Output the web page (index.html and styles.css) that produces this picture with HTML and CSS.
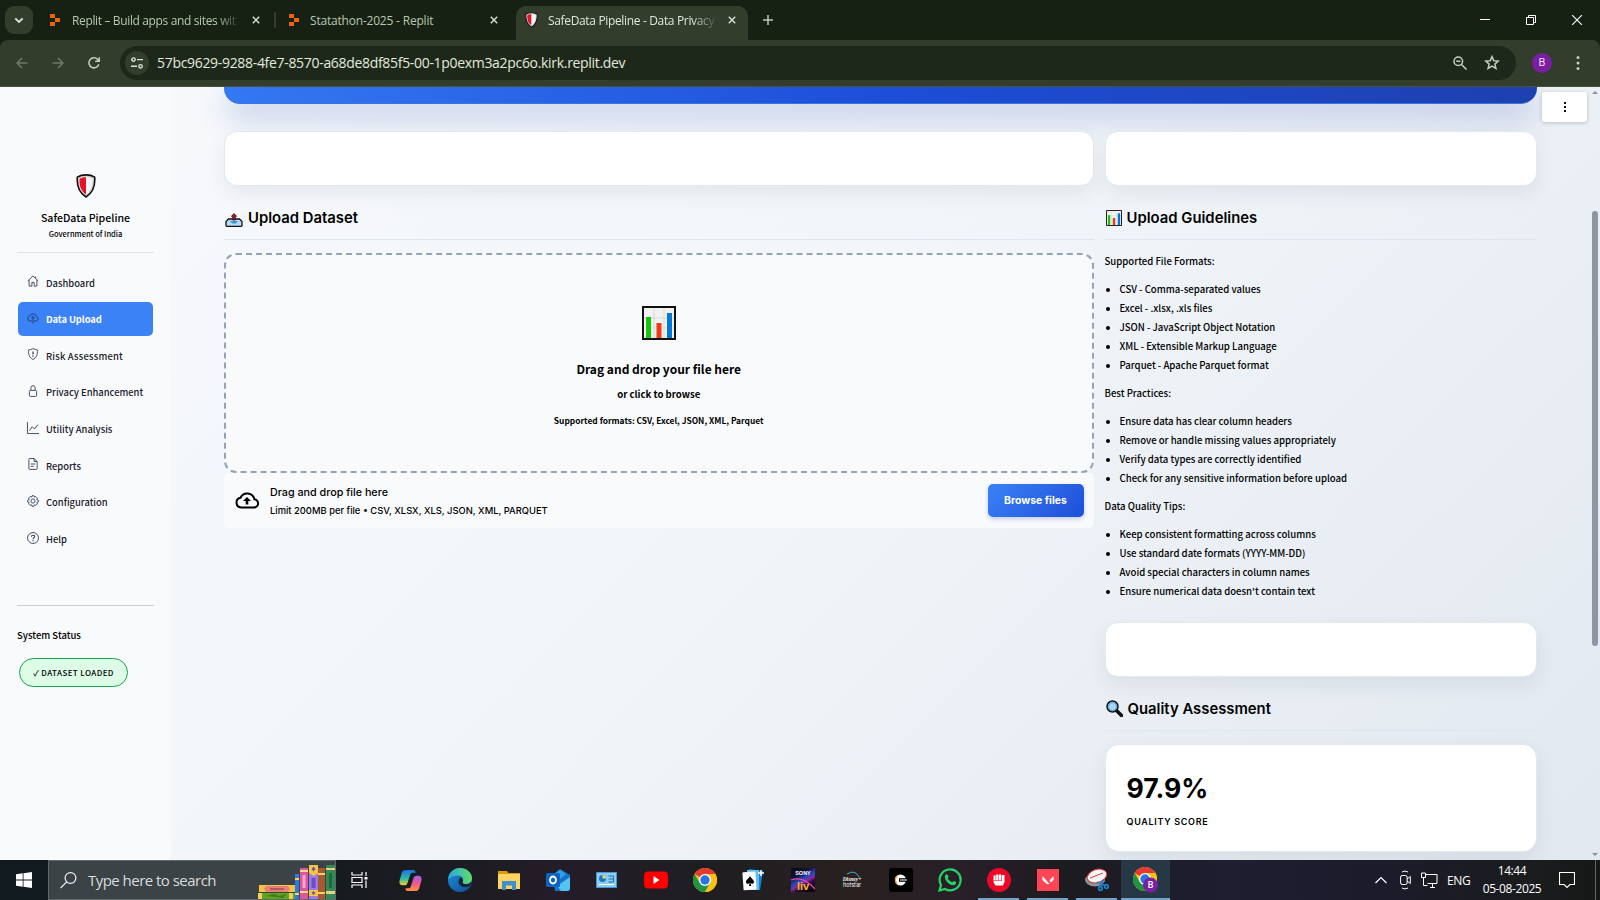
FILE: index.html
```html
<!DOCTYPE html>
<html lang="en">
<head>
<meta charset="utf-8">
<title>SafeData Pipeline - Data Privacy</title>
<link rel="stylesheet" href="styles.css">
</head>
<body>
<svg width="0" height="0" class="defs">
  <defs>
    <linearGradient id="edgeA" x1="0" y1="0" x2="1" y2="0"><stop offset="0" stop-color="#27a8e0"/><stop offset="1" stop-color="#62de63"/></linearGradient>
    <linearGradient id="edgeB" x1="0" y1="0" x2="1" y2="1"><stop offset="0" stop-color="#1b91dd"/><stop offset="1" stop-color="#114a95"/></linearGradient>
    <linearGradient id="copA" x1="0" y1="0" x2="0" y2="1"><stop offset="0" stop-color="#1676e6"/><stop offset=".55" stop-color="#2fb8a5"/><stop offset="1" stop-color="#f2d02c"/></linearGradient>
    <linearGradient id="copB" x1="0" y1="0" x2="0" y2="1"><stop offset="0" stop-color="#a95cf0"/><stop offset=".5" stop-color="#f0568f"/><stop offset="1" stop-color="#fb923c"/></linearGradient>
    <linearGradient id="sony" x1="0" y1="0" x2=".6" y2="1"><stop offset="0" stop-color="#0a0a18"/><stop offset=".35" stop-color="#101038"/><stop offset=".55" stop-color="#2747c0"/><stop offset=".68" stop-color="#8a2a9a"/><stop offset=".8" stop-color="#2a0f3e"/><stop offset="1" stop-color="#0c0616"/></linearGradient>
  </defs>
  <symbol id="replit" viewBox="0 0 10 12"><path fill="#f26207" d="M.6 0H4.400a.6.6 0 0 1 .6.6V4H.6A.6.6 0 0 1 0 3.400V.6A.6.6 0 0 1 .6 0ZM5 4h4.400a.6.6 0 0 1 .6.6v2.800a.6.6 0 0 1-.6.6H5ZM.6 8H5v3.400a.6.6 0 0 1-.6.6H.6a.6.6 0 0 1-.6-.6V8.600A.6.6 0 0 1 .6 8Z"/></symbol>
  <symbol id="shield" viewBox="0 0 20 24"><path d="M10 .9C7 .9 3.500 1.800 1.300 3.200c-.6 8 .8 15 8.700 19.800 7.900-4.800 9.300-11.800 8.700-19.800C16.500 1.800 13 .9 10 .9Z" fill="#d4d4d8" stroke="#111" stroke-width="1.600"/><path d="M10 3.300c-2.300 0-4.700.6-6.400 1.500C3.300 11 4.300 16.500 10 20.500Z" fill="#e81224"/><path d="M10 3.300c2.300 0 4.700.6 6.400 1.500.3 6.200-.7 11.700-6.400 15.700Z" fill="#f4f4f4"/></symbol>
  <symbol id="x" viewBox="0 0 8 8"><path d="M.8.8l6.400 6.400M7.200.8.800 7.200" stroke="currentColor" stroke-width="1.500" fill="none"/></symbol>
  <symbol id="chart" viewBox="0 0 34 34"><path fill="#f2f2f2" stroke="#111" stroke-width="2" d="M1 1h32v32H1z"/><path stroke="#d8d8d8" d="M12 2v30M22 2v30M2 12h30M2 22h30"/><path fill="#16c60c" d="M4 11h5v21H4z"/><path fill="#f03a17" d="M14.500 17h5v15h-5z"/><path fill="#0078d7" d="M25 7h5v25h-5z"/></symbol>
  <symbol id="chrome" viewBox="0 0 24 24"><circle cx="12" cy="12" r="12" fill="#fbc116"/><path d="M12 12 1.600 6A12 12 0 0 1 22.400 6H12Z" fill="#e33b2e"/><path d="M1.600 6A12 12 0 0 0 12 24l5.200-9L12 12 6.800 15Z" fill="#229342"/><path d="M12 6h10.400A12 12 0 0 1 12 24l5.200-9Z" fill="#fbc116"/><circle cx="12" cy="12" r="6" fill="#fff"/><circle cx="12" cy="12" r="4.700" fill="#2a74e8"/></symbol>
</svg>

<header class="browser">
  <div class="tabs">
    <div class="tab-search"><svg width="10" height="7" viewBox="0 0 10 7"><path d="M1.300 1.300 5 5l3.700-3.700" fill="none" stroke="#dfe6da" stroke-width="1.800"/></svg></div>
    <div class="tab t1"><svg width="10" height="12"><use href="#replit"/></svg><span class="tt fade">Replit – Build apps and sites wit</span><svg class="cl" width="8" height="8"><use href="#x"/></svg></div>
    <i class="sep"></i>
    <div class="tab t2"><svg width="10" height="12"><use href="#replit"/></svg><span class="tt">Statathon-2025 - Replit</span><svg class="cl" width="8" height="8"><use href="#x"/></svg></div>
    <div class="tab active"><svg width="13" height="16"><use href="#shield"/></svg><span class="tt fade">SafeData Pipeline - Data Privacy</span><svg class="cl" width="8" height="8"><use href="#x"/></svg></div>
    <svg class="plus" width="10" height="10" viewBox="0 0 10 10"><path d="M5 0v10M0 5h10" stroke="#bccab4" stroke-width="1.500"/></svg>
    <div class="win">
      <svg width="10" height="10" viewBox="0 0 10 10"><path d="M0 4.500h10" stroke="#fff"/></svg>
      <svg width="10" height="10" viewBox="0 0 10 10"><path d="M.5 2.500h7v7h-7zM2.500 2.500v-2h7v7h-2" stroke="#fff" fill="none"/></svg>
      <svg width="10" height="10" viewBox="0 0 10 10"><path d="M0 0l10 10M10 0 0 10" stroke="#fff" stroke-width="1.100"/></svg>
    </div>
  </div>
  <div class="toolbar">
    <svg class="nav" width="12" height="12" viewBox="0 0 12 12"><path d="M11.500 6H1M6 1 1 6l5 5" fill="none" stroke="#6c7966" stroke-width="1.500"/></svg>
    <svg class="nav" width="12" height="12" viewBox="0 0 12 12"><path d="M.5 6H11M6 1l5 5-5 5" fill="none" stroke="#6c7966" stroke-width="1.500"/></svg>
    <svg class="nav" width="12" height="12" viewBox="0 0 12 12"><path d="M10.800 7.200A5 5 0 1 1 9.700 2.500L11 4M11.200.2V4.200H7.200" fill="none" stroke="#c4d1bc" stroke-width="1.500"/></svg>
    <div class="omni">
      <span class="site"><svg width="12" height="12" viewBox="0 0 12 12"><g fill="none" stroke="#dbe3d5" stroke-width="1.400"><circle cx="2.500" cy="2.600" r="1.700"/><circle cx="9.500" cy="9.300" r="1.700"/><path d="M6 2.600h6M0 9.300h6"/></g></svg></span>
      <span class="url">57bc9629-9288-4fe7-8570-a68de8df85f5-00-1p0exm3a2pc6o.kirk.replit.dev</span>
      <svg class="mag" width="14" height="14" viewBox="0 0 14 14"><g fill="none" stroke="#c4ccbe" stroke-width="1.500"><circle cx="5.300" cy="5.300" r="4.300"/><path d="m8.500 8.500 5 5M3.200 5.300h4.200"/></g></svg>
      <svg width="16" height="15" viewBox="0 0 16 15"><path d="m8 1.600 1.800 4.100 4.500.4-3.400 3 1 4.400L8 11.200l-3.900 2.300 1-4.400-3.400-3 4.500-.4Z" fill="none" stroke="#c4ccbe" stroke-width="1.500"/></svg>
    </div>
    <span class="avatar">B</span>
    <svg class="dots" width="4" height="14" viewBox="0 0 4 14"><g fill="#c4d1bc"><circle cx="2" cy="1.600" r="1.500"/><circle cx="2" cy="7" r="1.500"/><circle cx="2" cy="12.400" r="1.500"/></g></svg>
  </div>
</header>

<div class="page">
  <aside>
    <svg class="logo" width="20" height="24"><use href="#shield"/></svg>
    <h3>SafeData Pipeline</h3>
    <p class="gov">Government of India</p>
    <nav>
      <a><svg viewBox="0 0 16 16"><path d="M1 8l7-6.800L15 8M2.800 6.500v8.300h3.700v-5h3v5h3.700V6.500M11.500 2v2.500"/></svg><span>Dashboard</span></a>
      <a class="on"><svg viewBox="0 0 16 16"><path d="M6.500 12H4A3.200 3.200 0 0 1 3.500 5.700 4.600 4.600 0 0 1 12.400 5.800 3.200 3.200 0 0 1 12.400 12H9.500M8 15.500V6M5.700 8.300 8 6l2.300 2.300"/></svg><span>Data Upload</span></a>
      <a><svg viewBox="0 0 16 16"><path d="M8 .8C6 1.700 4 2.300 2.200 2.600 1.500 8 3.300 13 8 15.300 12.700 13 14.500 8 13.800 2.600 12 2.300 10 1.700 8 .8Z"/><path d="M8 4.500v4M8 10v1.500" stroke-width="1.700"/></svg><span class="wide">Risk Assessment</span></a>
      <a><svg viewBox="0 0 16 16"><rect x="3.200" y="7.200" width="9.600" height="8" rx="1.500"/><path d="M5.200 7V3.700a2.800 2.800 0 0 1 5.600 0V7"/></svg><span>Privacy Enhancement</span></a>
      <a><svg viewBox="0 0 16 16"><path d="M.6 0v15.400H16M3.500 11.500 7 6.300l3 3L14.500 3.500"/></svg><span>Utility Analysis</span></a>
      <a><svg viewBox="0 0 16 16"><path d="M9.500.7H3.700A1.200 1.200 0 0 0 2.500 2v12a1.200 1.200 0 0 0 1.200 1.200h8.600a1.200 1.200 0 0 0 1.200-1.200V4.700ZM9.500.7v4h4M5 8h6M5 11h4"/></svg><span>Reports</span></a>
      <a><svg viewBox="0 0 16 16"><circle cx="8" cy="8" r="2.800"/><path d="m6.700 1-.6 1.800-1.900-.7-2 2 .7 1.900L1 6.700v2.600l1.900.6-.7 1.900 2 2 1.900-.7.6 1.900h2.600l.6-1.900 1.900.7 2-2-.7-1.900 1.900-.6V6.700l-1.900-.6.7-1.900-2-2-1.900.7L9.300 1Z"/></svg><span>Configuration</span></a>
      <a><svg viewBox="0 0 16 16"><circle cx="8" cy="8" r="7.300"/><path d="M5.800 6.200C5.900 3.600 10.300 3.600 10.300 6c0 1.600-2.200 1.700-2.200 3.500M8.100 10.800v1.400" stroke-width="1.400"/></svg><span>Help</span></a>
    </nav>
    <h4>System Status</h4>
    <div class="badge">✓ DATASET LOADED</div>
  </aside>

  <main>
    <div class="banner"></div>
    <div class="cols">
      <section>
        <div class="card slim"></div>
        <h2><svg width="18" height="15" viewBox="0 0 18 15" class="tray-icon"><path d="M1 13.500V9.500L3.500 7h11L17 9.500v4q0 .8-.8.8H1.800q-.8 0-.8-.8Z" fill="#b9dcf6" stroke="#111" stroke-width="1.300"/><path d="M5 9h8l-2 2.500H7Z" fill="#3a96dd"/><path d="M9 1.600 11.500 4.300H10.200V8H7.800V4.300H6.500Z" fill="#e81224" stroke="#111" stroke-width=".9"/></svg><span>Upload Dataset</span></h2>
        <div class="drop">
          <svg width="34" height="34"><use href="#chart"/></svg>
          <b class="d1">Drag and drop your file here</b>
          <b class="d2">or click to browse</b>
          <b class="d3">Supported formats: CSV, Excel, JSON, XML, Parquet</b>
        </div>
        <div class="uploader">
          <svg width="24" height="17" viewBox="0 0 24 17"><path d="M6 15.500h12.600a4.100 4.100 0 0 0 .8-8.200A7.400 7.400 0 0 0 5.500 5.800 4.900 4.900 0 0 0 6 15.500Z" fill="none" stroke="#000" stroke-width="2"/><path d="M12 5 16 9h-2.700v3.500h-2.600V9H8Z"/></svg>
          <div class="ut"><span class="u1">Drag and drop file here</span><span class="u2">Limit 200MB per file • CSV, XLSX, XLS, JSON, XML, PARQUET</span></div>
          <button>Browse files</button>
        </div>
      </section>
      <section>
        <div class="card slim"></div>
        <h2><svg width="16" height="16"><use href="#chart"/></svg><span>Upload Guidelines</span></h2>
        <div class="guide">
          <p>Supported File Formats:</p>
          <ul><li>CSV - Comma-separated values</li><li>Excel - .xlsx, .xls files</li><li>JSON - JavaScript Object Notation</li><li>XML - Extensible Markup Language</li><li>Parquet - Apache Parquet format</li></ul>
          <p>Best Practices:</p>
          <ul><li>Ensure data has clear column headers</li><li>Remove or handle missing values appropriately</li><li>Verify data types are correctly identified</li><li>Check for any sensitive information before upload</li></ul>
          <p>Data Quality Tips:</p>
          <ul><li>Keep consistent formatting across columns</li><li>Use standard date formats (YYYY-MM-DD)</li><li>Avoid special characters in column names</li><li>Ensure numerical data doesn't contain text</li></ul>
        </div>
        <div class="card slim"></div>
        <h2><svg width="17" height="17" viewBox="0 0 17 17"><path d="m10 10 5.500 5.500" stroke="#111" stroke-width="3.500" stroke-linecap="round"/><circle cx="6.500" cy="6.500" r="5.500" fill="#a9d8f5" stroke="#111" stroke-width="1.500"/><circle cx="6.500" cy="6.500" r="4" fill="none" stroke="#4aa3df"/></svg><span>Quality Assessment</span></h2>
        <div class="card score"><strong>97.9%</strong><span>QUALITY SCORE</span></div>
      </section>
    </div>
  </main>
  <div class="kebab"><i></i><i></i><i></i></div>
  <div class="scroll"><i class="up"></i><i class="thumb"></i><i class="down"></i></div>
</div>

<footer class="task">
  <div class="start"><svg width="16" height="16" viewBox="0 0 16 16"><path fill="#fff" d="M0 2.300 6.700 1.300v6.300H0ZM7.500 1.200 16 0v7.600H7.500ZM0 8.400h6.700v6.300L0 13.700ZM7.500 8.400H16V16l-8.500-1.200Z"/></svg></div>
  <div class="search">
    <svg width="17" height="17" viewBox="0 0 17 17"><g fill="none" stroke="#f0f0f0" stroke-width="1.200"><circle cx="10.500" cy="6" r="5.400"/><path d="M6.700 9.900.6 16"/></g></svg>
    <span>Type here to search</span>
    <svg class="books" width="77" height="34" viewBox="0 0 77 34"><path fill="#f5c344" d="M1 20h36v7H1z"/><path fill="#e98078" d="M8 21h22l2 3-2 3H8l-2-3z"/><path fill="#ad5b60" d="M12 23h14v2H12z"/><path fill="#5fa51d" d="M0 28h37v6H0z"/><path fill="#3f8014" d="m8 31 8-2 5 2 8-2-4 4-8-1z"/><path fill="#f0d05a" d="M0 28h4v6H0zM31 28h4v6h-4z"/><path fill="#2c7be0" d="M37 9h4v25h-4z"/><path fill="#f3d267" d="M37 13h4v2h-4zM37 28h4v2h-4z"/><path fill="#dd559e" d="M42 3h8v31h-8z"/><path fill="#f6d98a" d="M42 5h8v2h-8zM42 26h8v2h-8z"/><path fill="#f3a6cb" d="M44.500 10h3v13h-3z"/><path fill="#9a7be8" d="M51 0h9v34h-9z"/><path fill="#f6c73c" d="M51 0h9v8l-4.500 3L51 8zM51 25h9v6h-9z"/><path fill="#6a4fc0" d="m55.500 1.500 2 2.500-2 2.500-2-2.500zM53.500 13h4v10h-4zM55.500 26l2 2-2 2-2-2z"/><path fill="#a75a2e" d="M60 3h7v31h-7z"/><path fill="#f3d267" d="M60 8h7v2h-7zM60 27h7v2h-7z"/><path fill="#2f8a55" d="M68 0h9v34h-9z"/><path fill="#e8d27a" d="M68 3h9v2h-9zM68 26h9v3h-9z"/><path fill="#1d6a3e" d="M71 8h3v15h-3z"/></svg>
  </div>
  <div class="apps">
    <span><svg class="tv" width="18" height="16" viewBox="0 0 18 16"><g fill="none" stroke="#fff" stroke-width="1.200"><path d="M1 0v3h10V0M1 5.500h10v5H1zM1 16v-3h10v3M15 0v4M15 8.500V16"/></g><path fill="#fff" d="M13.500 5h3v2.500h-3z"/></svg></span>
    <span><svg width="23" height="21" viewBox="0 0 23 22"><path fill="url(#copA)" d="M7 0h7c2 0 2.500 1 3 3h-3c-2 0-2.700 1-3.200 3L8.500 13c-.6 2-1.500 3-3.500 3H3c-3 0-3.500-3-2.800-5.500l2-7C3 1 4 0 7 0Z"/><path fill="url(#copB)" d="M16 22H9c-2 0-2.500-1-3-3h3c2 0 2.700-1 3.200-3l2.300-7c.6-2 1.500-3 3.500-3h2c3 0 3.500 3 2.800 5.500l-2 7C20 21 19 22 16 22Z"/></svg></span>
    <span><svg width="24" height="24" viewBox="0 0 24 24"><circle cx="12" cy="12" r="12" fill="url(#edgeB)"/><path fill="url(#edgeA)" d="M0 11.500C1 4 6 0 12 0c7 0 12 5 12 10 0 4-3 6-6 6-3 0-4-1-3.500-2 1.500-2 .5-6.500-4-6.500C5.500 7.500 2 9 0 11.500Z"/><path fill="#1a222c" d="M14.500 14c-.6 1 .8 2.200 3.500 2.200 2 0 4-.8 5.200-2.500-.2 1.500-.8 3-1.600 4.200-5 2.600-11 .5-11-4.400 0-1.800 1-3.200 2.200-4 2.300 1 2.600 3.200 1.700 4.500Z"/></svg></span>
    <span><svg width="22" height="19" viewBox="0 0 22 19"><path fill="#d99a12" d="M0 0h9l1.500 2H22v4H0z"/><path fill="#fcd462" d="M0 3h22v15H0z"/><path fill="#3f8fd0" d="M4 10h14v9h-4v-4.500H8V19H4z"/></svg></span>
    <span><svg width="24" height="22" viewBox="0 0 24 22"><path fill="#1a70c8" d="M6 6 14 0l10 6v13q0 3-3 3H9z"/><path fill="#52c4f4" d="m24 8-13 9 4 5h6q3 0 3-3z"/><path fill="#2da3e8" d="M8 5 14 1l6 4-7 6H8z"/><rect y="4" width="14" height="14" rx="1.500" fill="#0f62c0"/><ellipse cx="7" cy="11" rx="3" ry="3.500" fill="none" stroke="#fff" stroke-width="1.800"/></svg></span>
    <span><svg width="21" height="16" viewBox="0 0 21 16"><path fill="#8ccdf4" stroke="#4398d1" d="M.5.500h20v15H.5z"/><circle cx="6.500" cy="6.500" r="3.500" fill="#1d77bf"/><path fill="#f5d36b" d="M6.500 6.500V3a3.500 3.500 0 0 1 3.500 3.500z"/><path stroke="#246da5" fill="none" d="M12.500 4h5v6h-5M12.500 7h5"/><path stroke="#fff" d="M3 12.500h15"/></svg></span>
    <span><svg width="24" height="18" viewBox="0 0 24 18"><rect width="24" height="17" y=".5" rx="4" fill="#f00"/><path fill="#fff" d="m9.500 5 6 4-6 4z"/></svg></span>
    <span><svg width="24" height="24"><use href="#chrome"/></svg></span>
    <span><svg width="23" height="22" viewBox="0 0 23 22"><path fill="#1683d3" d="m7 0 14 2-3 19H7z"/><path fill="#62bdf0" d="m5 1 12 0v20H5z"/><rect x="1" y="3" width="13" height="18" rx="1" fill="#fff" transform="rotate(-4 7 12)"/><path d="M8 7c1 2.500 4 3.500 4 6 0 2-2.500 2.300-3.500 1l.8 3H7l.6-3C6.500 15.300 4 15 4 13c0-2.500 3-3.500 4-6Z"/><path stroke="#fff" stroke-width="1.500" d="M19 1v6M16 4h6"/></svg></span>
    <span><svg width="24" height="24" viewBox="0 0 24 24"><path fill="url(#sony)" d="M0 0h24v24H0z"/><path fill="none" stroke="#e94c9a" stroke-width="1.300" d="M0 12c8-3 16 0 24 9"/><text x="12" y="7" text-anchor="middle" class="sony">SONY</text><text x="12" y="22" text-anchor="middle" class="liv">liv</text></svg></span>
    <span><svg width="24" height="24" viewBox="0 0 24 24"><path d="M7 6q8-5 12 3" fill="none" stroke="#39b6cf"/><text x="12" y="12.500" text-anchor="middle" class="dis">Disney+</text><text x="12" y="18.500" text-anchor="middle" class="hot">hotstar</text></svg></span>
    <span><svg width="24" height="24" viewBox="0 0 24 24"><rect width="24" height="24" rx="3"/><circle cx="11.500" cy="12" r="5.500" fill="#fff"/><path d="M8 8a6 6 0 0 0 0 8" fill="none" stroke="#e5a23c" stroke-width="1.500"/><path d="M10 10.200h8v3.600h-8z"/><path stroke="#fff" d="M11 12h7"/></svg></span>
    <span><svg width="24" height="24" viewBox="0 0 24 24"><path d="M1.500 22.500 3 17A10.500 10.500 0 1 1 7 21Z" fill="none" stroke="#25d366" stroke-width="2.200"/><path fill="#25d366" d="M8 6.500c1-.8 1.800.2 2.500 2 .3.800-1 1.400-.7 2 1 1.800 2.300 3 4.300 3.800.7.200 1.200-1.600 2-1.200 2 .9 2.500 1.300 1.800 2.700-1.500 2.500-5 1.500-7.700-.8C7.500 12.500 5.500 8.500 8 6.500Z"/></svg></span>
    <span class="run"><svg width="24" height="24" viewBox="0 0 24 24"><circle cx="12" cy="12" r="12" fill="#ec0928"/><path fill="#fff" d="M6.500 7.500h2.200v5H6.500zM9.200 6.500h2.300v6H9.200zM12 6.500h2.300v6H12zM14.900 7h2.600v7l-1.700 3.500H8.500L6.500 14v-1h8.400z"/></svg></span>
    <span class="run"><svg width="22" height="22" viewBox="0 0 22 22"><path fill="#fd4556" d="M0 0h22v22H0z"/><path fill="#fff" d="m5.500 7 7 8h-3l-4-4zM16.500 7v4l-2.500 2.500-1.500-2z"/></svg></span>
    <span class="run"><svg width="24" height="24" viewBox="0 -1 24 24"><ellipse cx="10" cy="11" rx="10" ry="6.500" fill="#8d9298"/><ellipse cx="12" cy="7" rx="10" ry="6.500" fill="#f6f6f6" stroke="#d53a35" transform="rotate(-18 12 7)"/><path d="m5 9 13-5" stroke="#d53a35"/><g fill="none" stroke="#1a82c8" stroke-width="1.700"><path d="m18 11-2 7M12 13l8 3.500"/><circle cx="15.500" cy="19.500" r="1.800"/><circle cx="21.500" cy="17.500" r="1.800"/></g></svg></span>
    <span class="run cur"><svg width="25" height="26" viewBox="0 0 25 26"><use href="#chrome" width="24" height="24"/><circle cx="17.500" cy="18" r="7.500" fill="#7b1fa2"/><text x="17.500" y="21.300" text-anchor="middle" class="pb">B</text></svg></span>
  </div>
  <div class="tray">
    <svg width="12" height="8" viewBox="0 0 12 8"><path d="M.5 7 6 1.500 11.500 7" fill="none" stroke="#fff" stroke-width="1.200"/></svg>
    <svg class="cam" width="11" height="20" viewBox="0 0 11 20"><g fill="none" stroke="#fff"><rect x=".6" y="5.500" width="6.500" height="9" rx="1.500"/><path d="m7 9 3.300-2.500v7L7 11M2 2Q5 0 8 2M2 18q3 2 6 0"/></g></svg>
    <svg class="net" width="17" height="16" viewBox="0 0 17 16"><g fill="none" stroke="#fff"><path d="M5 2.500h11v9H6.500M9 15.500h5M11.500 11.500v4M.5 1v4.500h4V1zM2.500 5.500v8h4"/></g></svg>
    <span class="eng">ENG</span>
    <span class="clock"><span>14:44</span><span>05-08-2025</span></span>
    <svg class="note" width="16" height="17" viewBox="0 0 16 17"><path d="M.5.500h15v12h-4.500L8 15.500 5 12.500H.5z" fill="none" stroke="#fff" stroke-width="1.100"/></svg>
    <i class="peek"></i>
  </div>
</footer>
</body>
</html>
```
FILE: styles.css
```css
* { box-sizing: border-box; }
body { margin: 0; width: 1600px; height: 900px; overflow: hidden; font-family: "Noto Sans CJK SC", "Open Sans", sans-serif; color: #000; display: flex; flex-direction: column; }
svg { display: block; flex: none; }
i { display: block; }
h2, h3, h4, p, ul { margin: 0; padding: 0; }
.defs { position: absolute; }

.browser { height: 87px; flex: none; background: #162113; font-family: "Open Sans", sans-serif; }
.tabs { height: 40px; display: flex; align-items: center; }
.tab-search { width: 28px; height: 28px; margin-left: 5px; border-radius: 9px; background: #323d2c; display: grid; place-items: center; }
.tab { display: flex; align-items: center; color: #b9c7b1; font-size: 12px; }
.tt { white-space: nowrap; margin-left: 12px; width: 167px; line-height: 20px; letter-spacing: -.36px; padding-top: 1px; }
.fade { -webkit-mask-image: linear-gradient(90deg, #000 86%, transparent 102%); mask-image: linear-gradient(90deg, #000 86%, transparent 102%); }
.cl { margin-left: 13px; color: #d4ddce; }
.t1 { margin-left: 17px; }
.t2 { margin-left: 13px; }
.t2 .tt { margin-left: 11px; width: 167px; letter-spacing: -.2px; }
.sep { width: 2px; height: 16px; background: #323d2c; margin-left: 14px; }
.active { align-self: flex-end; width: 232px; height: 34px; margin-left: 18px; padding: 0 0 6px 9px; border-radius: 10px 10px 0 0; background: #323d2c; color: #dfe6da; }
.active .tt { margin-left: 10px; width: 167px; letter-spacing: -.34px; }
.plus { margin-left: 15px; }
.win { margin-left: auto; margin-right: 18px; display: flex; gap: 36px; }
.toolbar { height: 47px; background: #323d2c; border-radius: 8px 8px 0 0; display: flex; align-items: center; padding: 0 20px 1px 16px; border-bottom: 1px solid #48523f; }
.nav { margin-right: 24px; }
.omni { width: 1396px; height: 34px; margin-left: -4px; border-radius: 17px; background: #1d281a; display: flex; align-items: center; padding-left: 5px; }
.site { width: 24px; height: 24px; border-radius: 50%; background: #323d2c; display: grid; place-items: center; }
.url { margin-left: 8px; width: 1296px; color: #e3e9de; font-size: 14px; letter-spacing: -.315px; white-space: nowrap; }
.mag { margin-right: 17px; }
.avatar { width: 20px; height: 20px; margin-left: auto; border-radius: 50%; background: #7b1fa2; color: #f0dcf6; font: 11px/20px Roboto, sans-serif; text-align: center; }
.dots { margin-left: 24px; }

.page { height: 773px; flex: none; display: flex; position: relative; overflow: hidden; background: linear-gradient(135deg, #f8fafc 0%, #f1f5f9 50%, #e2e8f0 100%); }
aside { width: 171px; height: 773px; background: #f9fafc; padding: 87px 17px 0; }
.logo { margin: 0 auto; }
h3 { font-size: 10.600px; font-weight: 500; line-height: 16px; margin-top: 12px; text-align: center; white-space: nowrap; }
.gov { font-size: 7.500px; font-weight: 500; line-height: 12px; margin-top: 2px; height: 25px; border-bottom: 1px solid #dde4ec; text-align: center; }
nav { margin-top: 12px; border-bottom: 1px solid #cbced4; height: 341px; }
nav a { display: flex; align-items: center; height: 34px; margin: 0 1px 2.670px; padding: 0 0 0 9px; border-radius: 5px; font-size: 9.400px; font-weight: 500; white-space: nowrap; color: #1a202c; }
nav span { padding-top: 1px; }
nav svg { width: 12px; height: 12px; margin: 0 7px 2px 0; fill: none; stroke: #364152; stroke-width: 1.200; overflow: visible; }
nav .wide { letter-spacing: .2px; }
nav .on { background: #3b82f6; color: #fff; font-weight: 700; letter-spacing: -.1px; }
nav .on svg { stroke: #1f3a68; }
h4 { font-size: 9.500px; font-weight: 500; line-height: 16px; margin-top: 21px; }
.badge { width: 109px; height: 29px; margin: 15px 0 0 2px; border: 1px solid #16a34a; border-radius: 15px; background: #dcfce7; font-size: 8px; font-weight: 500; line-height: 27px; letter-spacing: .4px; text-align: center; white-space: nowrap; }

main { margin-left: 53px; width: 1313px; }
.banner { height: 17px; border-radius: 0 0 16px 16px; background: linear-gradient(90deg, #3478f2 0%, #1d4ed8 50%, #1e40af 100%); border-bottom: 1px solid #3673ea; box-shadow: 0 12px 30px rgba(40, 70, 180, .32); }
.cols { display: grid; grid-template-columns: 869.500px 432.500px; gap: 11px; margin-top: 27px; }
.card { background: #fff; border: 1px solid #e2e8f0; border-radius: 13px; box-shadow: 0 8px 20px rgba(40, 50, 70, .08); }
.slim { height: 55px; }
h2 { display: flex; align-items: center; gap: 5px; height: 42px; margin-top: 12px; padding: 0 0 2px 1px; border-bottom: 1px solid #e0e6ee; font: 600 14.850px/20px Inter, sans-serif; white-space: nowrap; }
.tray-icon { margin: 3px 0 0; }
.drop { height: 220px; margin-top: 13px; border: 2px dashed #94a3b8; border-radius: 12px; background: #f9fafc; display: flex; flex-direction: column; align-items: center; padding-top: 51px; white-space: nowrap; }
.drop b { font-weight: 700; }
.d1 { font-size: 12px; line-height: 20px; margin-top: 19px; }
.d2 { font-size: 9.600px; line-height: 16px; margin-top: 7px; }
.d3 { font-size: 8.400px; line-height: 14px; margin-top: 11px; }
.uploader { height: 55px; background: #f9fafc; border-radius: 5px; display: flex; align-items: center; padding: 0 10px 0 11px; font-family: Inter, sans-serif; }
.ut { display: flex; flex-direction: column; margin: 2px 0 0 11px; white-space: nowrap; font-weight: 500; }
.u1 { font-size: 10.750px; line-height: 18px; }
.u2 { font-size: 9.400px; line-height: 17px; }
button { margin-left: auto; width: 96px; height: 33px; border: 0; border-radius: 5px; background: linear-gradient(135deg, #3b82f6, #1d4ed8); color: #fff; font: 700 10.500px Inter, sans-serif; box-shadow: 0 2px 4px rgba(30, 64, 175, .25); padding: 0; white-space: nowrap; }
.guide { height: 382px; padding-top: 12px; font-size: 9.580px; font-weight: 500; line-height: 19px; }
.guide p { height: 19px; margin-bottom: 9px; }
.guide ul { padding-left: 15px; margin-bottom: 9px; }
.guide li { height: 19px; white-space: nowrap; }
.score { height: 108px; margin-top: 13px; padding: 25px 21px; font-family: Inter, sans-serif; display: flex; flex-direction: column; border-radius: 14px; }
.score strong { font-size: 26.600px; line-height: 36px; font-weight: 700; }
.score span { font-size: 9px; line-height: 14px; margin-top: 9px; font-weight: 600; letter-spacing: .68px; }
.kebab { position: absolute; left: 1542px; top: 5px; width: 45px; height: 30px; border-radius: 3px; background: #fff; box-shadow: 0 1px 4px rgba(0, 0, 0, .2); display: flex; flex-direction: column; align-items: center; justify-content: center; gap: 2px; }
.kebab i { width: 2px; height: 2px; background: #111; }
.scroll { position: absolute; right: 2px; top: 0; width: 6px; height: 773px; display: flex; flex-direction: column; align-items: center; }
.thumb { width: 6px; height: 435px; margin-top: 117px; border-radius: 3px; background: #8e96a3; }
.up { margin-top: 4px; border: 3px solid transparent; border-top: 0; border-bottom-color: #8b92a0; }
.down { margin-top: 207px; border: 3px solid transparent; border-bottom: 0; border-top-color: #8b92a0; }

.task { height: 40px; flex: none; display: flex; background: linear-gradient(90deg, #101a1f 0, #171b1f 340px, #1e1c22 480px, #241d29 560px, #1e1e22 700px, #29201f 850px, #281f28 960px, #1c1b20 1070px, #1f1e31 1230px, #1c1b2b 1380px, #1a1c1d 1540px, #151817); font-family: "Open Sans", sans-serif; color: #fff; }
.start { width: 48px; display: grid; place-items: center; }
.search { width: 288px; border: 1px solid #62676a; background: #3b4346; display: flex; align-items: center; padding-left: 11px; color: #d9dcdc; font-size: 15px; white-space: nowrap; overflow: hidden; }
.search span { margin-left: 11px; width: 172px; letter-spacing: -.53px; }
.books { align-self: flex-end; }
.apps { display: flex; margin-left: 1px; }
.apps span { width: 49px; height: 40px; display: grid; place-items: center; }
.tv { margin-right: 3px; }
.run { position: relative; }
.run::after { content: ""; position: absolute; left: 4px; right: 4px; bottom: 0; height: 2px; background: #76a4c8; }
.cur { background: #263845; }
.cur::after { left: 0; right: 0; }
.sony { font: 700 5.500px "Liberation Sans", sans-serif; fill: #fff; }
.liv { font: 700 11px "Liberation Sans", sans-serif; fill: #f7b52b; }
.dis { font: italic 700 5.500px "Liberation Serif", serif; fill: #fff; }
.hot { font: 5.500px Inter, sans-serif; fill: #fff; }
.pb { font: 500 9px Roboto, sans-serif; fill: #fff; }
.tray { margin-left: auto; display: flex; align-items: center; white-space: nowrap; }
.cam { margin-left: 13px; }
.net { margin-left: 10px; }
.eng { font-size: 12px; margin-left: 9px; width: 25px; letter-spacing: -.4px; }
.clock { width: 62px; margin-left: 9px; display: flex; flex-direction: column; align-items: center; font-size: 12px; line-height: 18px; letter-spacing: -.4px; }
.note { margin-left: 16px; }
.peek { width: 1px; height: 40px; background: #62666a; margin: 0 4px 0 20px; }
```
